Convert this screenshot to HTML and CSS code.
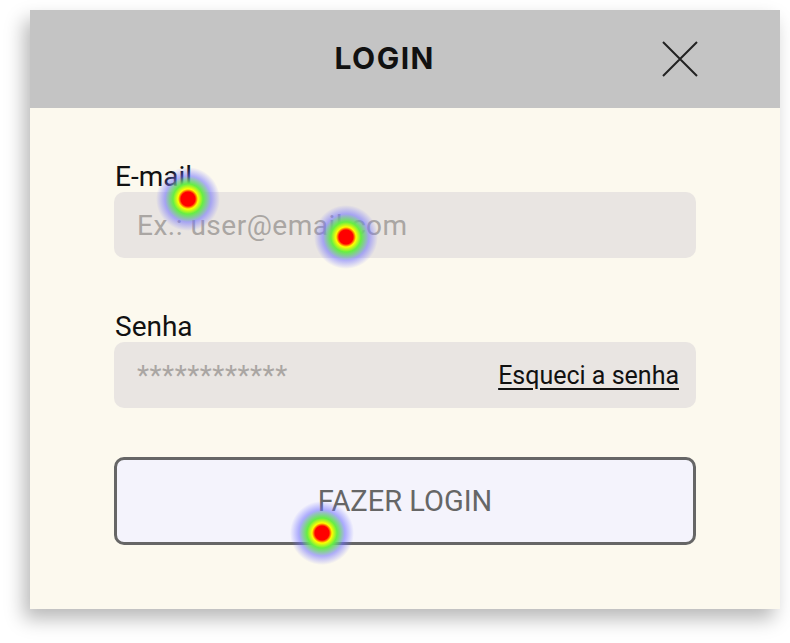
FILE: index.html
```html
<!DOCTYPE html>
<html lang="pt-BR">
<head>
    <meta charset="UTF-8">
    <meta name="viewport" content="width=device-width, initial-scale=1.0">
    <title>Login</title>
    <link rel="stylesheet" href="styles.css">
</head>
<body>
    <div class="modal">
        <div class="modal-header">
            <h1 class="modal-title">LOGIN</h1>
            <button class="close-btn" aria-label="Fechar">
                <svg width="38" height="38" viewBox="0 0 38 38">
                    <path d="M2 2 L36 36 M36 2 L2 36" stroke="#222" stroke-width="2" fill="none"/>
                </svg>
            </button>
        </div>
        <form class="modal-body">
            <label class="field-label" for="email">E-mail</label>
            <div class="field">
                <input id="email" type="email" placeholder="Ex.: user@email.com">
            </div>

            <label class="field-label second" for="senha">Senha</label>
            <div class="field">
                <input id="senha" type="password" placeholder="************">
                <a href="#" class="forgot">Esqueci a senha</a>
            </div>

            <button type="button" class="login-btn">FAZER LOGIN</button>
        </form>
    </div>

    <!-- click heatmap overlay -->
    <span class="dot dot-1"></span>
    <span class="dot dot-2"></span>
    <span class="dot dot-3"></span>
</body>
</html>
```

FILE: styles.css
```css
body {
    margin: 0;
    padding: 10px 10px 0 30px;
    background-color: #ffffff;
    font-family: Roboto, "Liberation Sans", sans-serif;
    position: relative;
    height: 643px;
    box-sizing: border-box;
    overflow: hidden;
}
.modal {
    width: 750px;
    background-color: #fcf9ee;
    box-shadow: -6px 10px 18px rgba(0, 0, 0, 0.28);
}
.modal-header {
    height: 98px;
    background-color: #c4c4c4;
    display: flex;
    align-items: center;
    justify-content: flex-end;
    padding-right: 81px;
    gap: 226px;
}
.modal-title {
    margin: 0 0 3px 0;
    font-family: Inter, "DejaVu Sans", sans-serif;
    font-weight: 700;
    font-size: 30px;
    letter-spacing: 1.5px;
    color: #111;
}
.close-btn {
    border: none;
    background: none;
    padding: 0;
    width: 38px;
    height: 38px;
    cursor: pointer;
}
.close-btn svg {
    display: block;
}
.modal-body {
    padding: 54px 84px 64px 84px;
    display: flex;
    flex-direction: column;
}
.field-label {
    font-size: 28px;
    line-height: 30px;
    color: #111;
    padding-left: 1px;
}
.field-label.second {
    margin-top: 54px;
}
.field {
    height: 66px;
    background-color: #e9e5e2;
    border-radius: 10px;
    display: flex;
    align-items: center;
    padding: 0 17px 0 23px;
}
.field input {
    flex: 1;
    border: none;
    background: transparent;
    font-family: Roboto, "Liberation Sans", sans-serif;
    font-size: 28px;
    letter-spacing: 0.5px;
    color: #333;
    outline: none;
    padding: 0;
    min-width: 0;
}
.field input::placeholder {
    color: #aaa6a3;
}
.forgot {
    font-size: 25px;
    color: #111;
    text-decoration: underline;
    text-underline-offset: 4px;
}
.login-btn {
    margin-top: 49px;
    height: 88px;
    border: 3px solid #666666;
    border-radius: 10px;
    background-color: #f4f3fc;
    font-family: Roboto, "Liberation Sans", sans-serif;
    font-size: 29px;
    color: #666666;
    cursor: pointer;
}
.dot {
    position: absolute;
    width: 64px;
    height: 64px;
    margin: -32px 0 0 -32px;
    border-radius: 50%;
    background: radial-gradient(circle, #ff0000 0, #ff0000 7px, #ffff00 10px, #66ee44 15px, rgba(110, 110, 255, 0.55) 23px, rgba(140, 140, 255, 0) 32px);
    pointer-events: none;
}
.dot-1 { left: 188px; top: 199px; }
.dot-2 { left: 346px; top: 237px; }
.dot-3 { left: 322px; top: 533px; height: 70px; margin-top: -35px; }
```
